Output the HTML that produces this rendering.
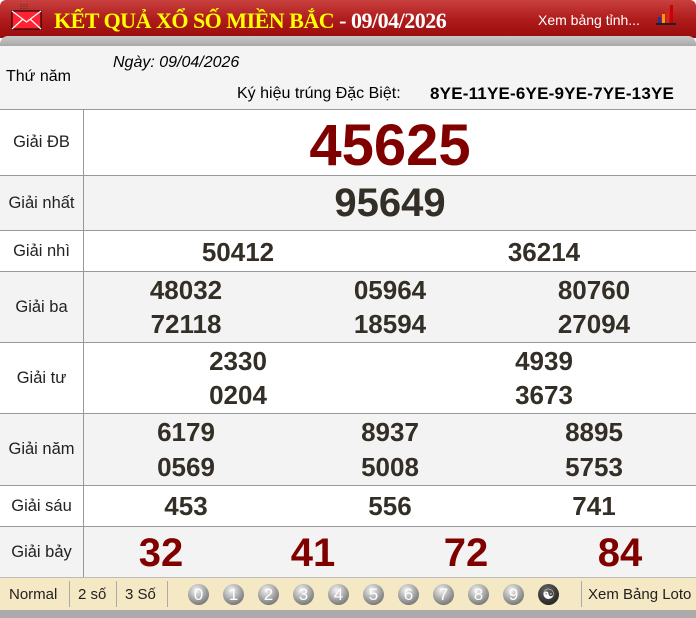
<!DOCTYPE html>
<html><head><meta charset="utf-8"><style>
*{margin:0;padding:0;box-sizing:border-box}
body{width:696px;height:618px;background:#fff;font-family:"Liberation Sans",Arial,sans-serif;overflow:hidden;position:relative}
.hdr{position:absolute;left:0;top:0;width:696px;height:38px;background:linear-gradient(#c8403f,#b01c1c 50%,#9a0c0c);border-radius:6px 6px 0 0}
.band{position:absolute;left:0;top:36px;width:696px;height:10px;background:linear-gradient(#c9c9c9,#a8a8a8);border-radius:8px 8px 0 0}
.title{position:absolute;left:54px;top:8px;font-family:"Liberation Serif",serif;font-weight:bold;font-size:22px;color:#ffff00;white-space:nowrap;letter-spacing:-0.5px}
.title span{color:#fff}
.xem{position:absolute;left:538px;top:12px;color:#fff;font-size:14px}
.row{position:absolute;left:0;width:696px;border-top:1px solid #999}
.lab{position:absolute;left:0;top:0;bottom:0;width:84px;border-right:1px solid #999;display:flex;align-items:center;justify-content:center;font-size:16.5px;color:#222}
.n{position:absolute;font-weight:bold;color:#332e26;transform:translateX(-50%);white-space:nowrap}
.g{background:#f3f3f3}
.foot{position:absolute;left:0;top:577px;width:696px;height:33px;background:#f5e8c4;border-top:1px solid #bbb;font-size:15px;color:#222}
.foot .t{position:absolute;top:8px}
.sep{position:absolute;top:3px;height:26px;border-left:1px solid #aaa}
.ball{position:absolute;top:6px;width:21px;height:21px;border-radius:50%;background:radial-gradient(circle at 40% 30%,#f4f4f4,#999 55%,#555);color:#fff;font-size:17px;text-align:center;line-height:21px}
.bot{position:absolute;left:0;top:610px;width:696px;height:8px;background:#aaa}
</style></head><body>
<div class="hdr"></div>
<div class="band"></div>
<svg style="position:absolute;left:11px;top:2px" width="32" height="28" viewBox="0 0 32 28"><path d="M10 2v5M13 2v5M16 2v5" stroke="#333" stroke-width="1" stroke-dasharray="1 1"/><rect x="1" y="9" width="29" height="18" fill="#f23" stroke="#000"/><path d="M1 9l14.5 11 14.5-11M1 27l11-10M30 27l-11-10" stroke="#fff" fill="none" stroke-width="1.2"/></svg>
<div class="title">KẾT QUẢ XỔ SỐ MIỀN BẮC <span>- 09/04/2026</span></div>
<div class="xem">Xem bảng tỉnh...</div>
<svg style="position:absolute;left:656px;top:5px" width="30" height="20"><rect x="2" y="12" width="3" height="6" fill="#23a"/><rect x="6" y="9" width="3" height="9" fill="#f90"/><rect x="10" y="6" width="3" height="12" fill="#d22"/><rect x="14" y="0" width="3" height="18" fill="#c00"/><rect x="0" y="18" width="20" height="2" fill="#222"/></svg>

<div class="row" style="top:46px;height:63px;background:#f4f4f4;border-top:none">
<div style="position:absolute;left:6px;top:22px;font-size:16px">Thứ năm</div>
<div style="position:absolute;left:113px;top:8px;font-size:16px;font-style:italic">Ngày: 09/04/2026</div>
<div style="position:absolute;left:237px;top:39px;font-size:16px">Ký hiệu trúng Đặc Biệt:</div>
<div style="position:absolute;left:430px;top:38px;font-size:17px;font-weight:bold;letter-spacing:0.2px">8YE-11YE-6YE-9YE-7YE-13YE</div>
</div>

<div class="row" style="top:109px;height:66px"><div class="lab">Giải ĐB</div><div class="n" style="left:390px;top:2px;font-size:58px;color:#800000">45625</div></div>
<div class="row g" style="top:175px;height:55px"><div class="lab">Giải nhất</div><div class="n" style="left:390px;top:5px;font-size:40px">95649</div></div>
<div class="row" style="top:230px;height:41px"><div class="lab">Giải nhì</div><div class="n" style="left:238px;top:6px;font-size:26px">50412</div><div class="n" style="left:544px;top:6px;font-size:26px">36214</div></div>
<div class="row g" style="top:271px;height:71px"><div class="lab">Giải ba</div>
<div class="n" style="left:186px;top:3px;font-size:26px">48032</div><div class="n" style="left:390px;top:3px;font-size:26px">05964</div><div class="n" style="left:594px;top:3px;font-size:26px">80760</div>
<div class="n" style="left:186px;top:37px;font-size:26px">72118</div><div class="n" style="left:390px;top:37px;font-size:26px">18594</div><div class="n" style="left:594px;top:37px;font-size:26px">27094</div></div>
<div class="row" style="top:342px;height:71px"><div class="lab">Giải tư</div>
<div class="n" style="left:238px;top:3px;font-size:26px">2330</div><div class="n" style="left:544px;top:3px;font-size:26px">4939</div>
<div class="n" style="left:238px;top:37px;font-size:26px">0204</div><div class="n" style="left:544px;top:37px;font-size:26px">3673</div></div>
<div class="row g" style="top:413px;height:72px"><div class="lab">Giải năm</div>
<div class="n" style="left:186px;top:3px;font-size:26px">6179</div><div class="n" style="left:390px;top:3px;font-size:26px">8937</div><div class="n" style="left:594px;top:3px;font-size:26px">8895</div>
<div class="n" style="left:186px;top:38px;font-size:26px">0569</div><div class="n" style="left:390px;top:38px;font-size:26px">5008</div><div class="n" style="left:594px;top:38px;font-size:26px">5753</div></div>
<div class="row" style="top:485px;height:41px"><div class="lab">Giải sáu</div>
<div class="n" style="left:186px;top:5px;font-size:26px">453</div><div class="n" style="left:390px;top:5px;font-size:26px">556</div><div class="n" style="left:594px;top:5px;font-size:26px">741</div></div>
<div class="row g" style="top:526px;height:51px"><div class="lab">Giải bảy</div>
<div class="n" style="left:161px;top:4px;font-size:40px;color:#800000">32</div><div class="n" style="left:313px;top:4px;font-size:40px;color:#800000">41</div><div class="n" style="left:466px;top:4px;font-size:40px;color:#800000">72</div><div class="n" style="left:620px;top:4px;font-size:40px;color:#800000">84</div></div>

<div class="foot">
<div class="t" style="left:9px">Normal</div><div class="sep" style="left:69px"></div>
<div class="t" style="left:78px">2 số</div><div class="sep" style="left:116px"></div>
<div class="t" style="left:125px">3 Số</div><div class="sep" style="left:167px"></div>
<div class="ball" style="left:188px">0</div><div class="ball" style="left:223px">1</div><div class="ball" style="left:258px">2</div><div class="ball" style="left:293px">3</div><div class="ball" style="left:328px">4</div><div class="ball" style="left:363px">5</div><div class="ball" style="left:398px">6</div><div class="ball" style="left:433px">7</div><div class="ball" style="left:468px">8</div><div class="ball" style="left:503px">9</div>
<div class="ball" style="left:538px;background:radial-gradient(circle at 40% 30%,#666,#111);font-size:14px">☯</div>
<div class="sep" style="left:581px"></div>
<div class="t" style="left:588px">Xem Bảng Loto</div>
</div>
<div class="bot"></div>
</body></html>
